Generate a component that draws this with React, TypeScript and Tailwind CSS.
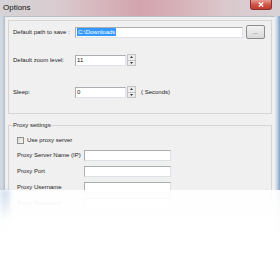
import React from "react";

function Spinner() {
  return (
    <div className="flex flex-col w-[9px] h-[12px] ml-[1px]">
      <div className="flex-1 flex items-center justify-center bg-[#ececec] border border-[#c3c3c3]">
        <svg width="3" height="2" viewBox="0 0 3 2"><path d="M0 2 L1.5 0 L3 2 Z" fill="#333" /></svg>
      </div>
      <div className="flex-1 flex items-center justify-center bg-[#ececec] border border-t-0 border-[#c3c3c3]">
        <svg width="3" height="2" viewBox="0 0 3 2"><path d="M0 0 L1.5 2 L3 0 Z" fill="#333" /></svg>
      </div>
    </div>
  );
}

function Input({ w, children }: { w: string; children?: React.ReactNode }) {
  return (
    <div className={`${w} h-[11px] bg-white border border-[#abadb3] border-b-[#dde2e8] border-r-[#dde2e8] flex items-center pl-[1px] text-[6px] leading-[7px]`}>
      {children}
    </div>
  );
}

export default function App() {
  return (
    <div className="relative w-[280px] h-[270px] overflow-hidden bg-white font-['Liberation_Sans',Arial,sans-serif] text-[#1c1c1c]">
      {/* title bar */}
      <div className="h-[16px] flex items-start bg-[linear-gradient(90deg,#d6d3d6_0%,#d9ccd0_20%,#d7b7bd_35%,#d3a4ad_50%,#d8b2b9_65%,#dac8cc_80%,#d8d2d6_100%)]">
        <div className="pl-[3px] pt-[3px] text-[8px] leading-[9px] text-[#111]">Options</div>
        <div className="ml-auto mr-[8px] w-[22px] h-[10px] rounded-b-[3px] border border-t-0 border-[#8a3030] bg-[linear-gradient(180deg,#e59a8f_0%,#d0574a_50%,#c23a2e_100%)] flex items-center justify-center">
          <svg width="6" height="5" viewBox="0 0 6 5">
            <path d="M0.8 0.5 L5.2 4.5 M5.2 0.5 L0.8 4.5" stroke="#fff" strokeWidth="1.3" />
          </svg>
        </div>
      </div>
      {/* body */}
      <div className="flex h-[254px]">
        <div className="w-[5px] bg-[linear-gradient(90deg,#d5d9de_0%,#c9d3de_60%,#a9b8c8_100%)]" />
        <div className="w-[270px] bg-[#f0f0f0] border-t border-[#b8c0c8] flex flex-col">
          {/* group 1 */}
          <div className="mx-[3px] mt-[3px] h-[94px] border border-[#d5d5d5] flex flex-col pl-[4px] text-[6px] leading-[7px]">
            <div className="mt-[4px] h-[14px] flex items-center">
              <div className="w-[62px]">Default path to save :</div>
              <Input w="w-[168px]">
                <span className="bg-[#3399ff] text-white px-[1px] leading-[8px]">C:\Downloads</span>
              </Input>
              <div className="ml-[3px] w-[19px] h-[14px] rounded-[2px] border border-[#8c8c8c] bg-[linear-gradient(180deg,#f3f3f3_0%,#e6e6e6_50%,#d9d9d9_100%)] flex items-center justify-center text-[6px] leading-[6px]">...</div>
            </div>
            <div className="mt-[14px] h-[14px] flex items-center">
              <div className="w-[62px]">Default zoom level:</div>
              <Input w="w-[51px]">11</Input>
              <Spinner />
            </div>
            <div className="mt-[18px] h-[14px] flex items-center">
              <div className="w-[62px]">Sleep:</div>
              <Input w="w-[51px]">0</Input>
              <Spinner />
              <div className="ml-[5px]">( Seconds)</div>
            </div>
          </div>
          {/* group 2 */}
          <fieldset className="mx-[3px] mt-[8px] flex-1 border border-[#d5d5d5] pl-[8px] text-[6px] leading-[7px]">
            <legend className="ml-[-4px] px-0">Proxy settings</legend>
            <div className="mt-[8px] h-[7px] flex items-center">
              <div className="w-[7px] h-[7px] border border-[#8e8f8f] bg-[linear-gradient(135deg,#dcdcdc_0%,#f6f6f6_100%)]" />
              <div className="ml-[3px]">Use proxy server</div>
            </div>
            <div className="mt-[6px] h-[11px] flex items-center">
              <div className="w-[67px]">Proxy Server Name (IP)</div>
              <Input w="w-[87px]" />
            </div>
            <div className="mt-[5px] h-[11px] flex items-center">
              <div className="w-[67px]">Proxy Port</div>
              <Input w="w-[87px]" />
            </div>
            <div className="mt-[5px] h-[11px] flex items-center">
              <div className="w-[67px]">Proxy Username</div>
              <Input w="w-[87px]" />
            </div>
            <div className="mt-[5px] h-[11px] flex items-center">
              <div className="w-[67px]">Proxy Password</div>
              <Input w="w-[87px]" />
            </div>
          </fieldset>
        </div>
        <div className="w-[5px] bg-[linear-gradient(90deg,#e8eaec_0%,#b9cde3_50%,#7f9fc4_100%)]" />
      </div>
      {/* reflection fade */}
      <div className="absolute left-0 right-0 top-[190px] bottom-0 bg-[linear-gradient(180deg,rgba(255,255,255,0.9)_0%,rgba(255,255,255,0.97)_30%,#ffffff_60%)]" />
      <div className="absolute left-0 top-[190px] w-[10px] h-[30px] bg-[linear-gradient(180deg,rgba(170,195,225,0.5)_0%,rgba(255,255,255,0)_100%)] blur-[2px]" />
    </div>
  );
}
